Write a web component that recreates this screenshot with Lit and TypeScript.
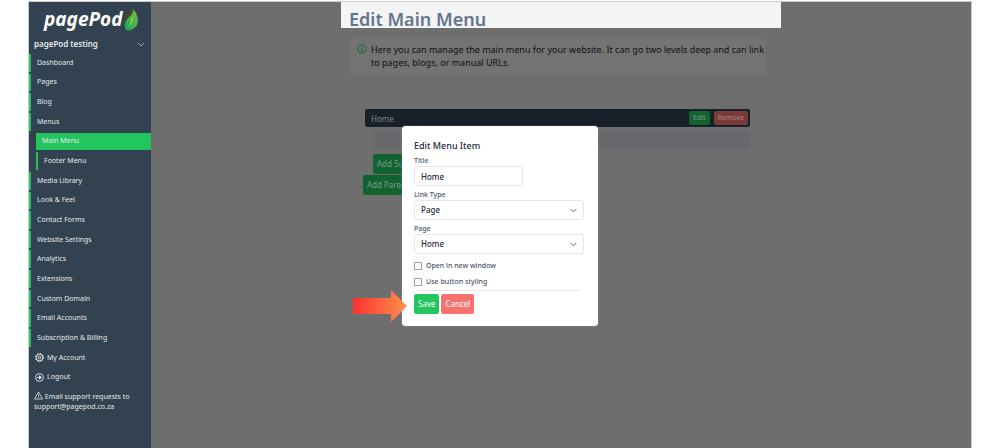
import { LitElement, html, css, svg } from "lit";
import { customElement, property, state } from "lit/decorators.js";
import { classMap } from "lit/directives/class-map.js";

const chevron = svg`<path d="M1 1 L4 4 L7 1" fill="none" stroke="currentColor" stroke-width="1" stroke-linecap="round" stroke-linejoin="round"/>`;

interface NavItem {
  label: string;
  sub?: boolean;
  active?: boolean;
}

const NAV: NavItem[] = [
  { label: "Dashboard" },
  { label: "Pages" },
  { label: "Blog" },
  { label: "Menus" },
  { label: "Main Menu", sub: true, active: true },
  { label: "Footer Menu", sub: true },
  { label: "Media Library" },
  { label: "Look & Feel" },
  { label: "Contact Forms" },
  { label: "Website Settings" },
  { label: "Analytics" },
  { label: "Extensions" },
  { label: "Custom Domain" },
  { label: "Email Accounts" },
  { label: "Subscription & Billing" },
];

@customElement("side-nav")
export class SideNav extends LitElement {
  static styles = css`
    :host {
      display: block;
      background: #334250;
      color: #e5e7eb;
      font-size: 7px;
      line-height: 10px;
    }
    * { box-sizing: border-box; }
    a { color: inherit; text-decoration: none; }
    .logo {
      display: flex;
      align-items: center;
      gap: 2px;
      height: 34px;
      padding-left: 15px;
      color: #fff;
      font: italic 700 19px/34px "Noto Sans", sans-serif;
    }
    .leaf { width: 14px; height: 24px; margin-top: 2px; }
    .site {
      display: flex;
      align-items: center;
      justify-content: space-between;
      width: 100%;
      height: 16px;
      padding: 0 6px 0 5px;
      border: 0;
      background: none;
      color: #e5e7eb;
      font: 600 8px/12px "Noto Sans", sans-serif;
    }
    .site svg { width: 8px; height: 5px; color: #94a3b8; }
    .links {
      display: grid;
      grid-auto-rows: 1fr;
      min-height: 334px;
      margin-top: 2px;
    }
    .item {
      display: flex;
      align-items: center;
      margin-bottom: 2px;
      padding-left: 6px;
      border-left: 2px solid #22c55e;
    }
    .sub { margin-left: 7px; }
    .active { background: #22c55e; padding-left: 4px; }
    .plain {
      display: flex;
      align-items: center;
      gap: 3px;
      margin-bottom: 2px;
      padding-left: 6px;
    }
    .icon { width: 9px; height: 9px; vertical-align: -1px; }
    .support { margin: 3px 5px 0; }
  `;

  render() {
    return html`
      <div class="logo">
        <span>pagePod</span>
        <svg class="leaf" viewBox="0 0 14 24" aria-hidden="true">
          <defs>
            <linearGradient id="pod" x1="0" y1="1" x2="1" y2="0">
              <stop offset="0" stop-color="#16a15a"/><stop offset="1" stop-color="#7cc242"/>
            </linearGradient>
          </defs>
          <path d="M9 1 C13 5 15 12 13 17 C11 21 6 23 2 22 C0 19 0 12 3 8 C5 5 8 4 9 1Z" fill="url(#pod)"/>
          <path d="M9 1 C10 5 7 7 5 9 C3 11 1 13 1 17 C0 13 1 10 3 8 C5 5 8 4 9 1Z" fill="#4d3a20"/>
          <path d="M9 7 C10 12 8 16 5 19 C6 15 7 12 9 7Z" fill="#8ccb4a"/>
        </svg>
      </div>
      <button class="site">pagePod testing
        <svg viewBox="0 0 8 5" aria-hidden="true">${chevron}</svg>
      </button>
      <nav class="links">
        ${NAV.map(
          (n) => html`<a href="#" class=${classMap({ item: true, sub: !!n.sub, active: !!n.active })}>${n.label}</a>`
        )}
        <a href="#" class="plain">
          <svg class="icon" viewBox="0 0 18 18" fill="none" stroke="currentColor" aria-hidden="true">
            <circle cx="9" cy="9" r="6.8" stroke-width="2"/>
            <circle cx="9" cy="9" r="2.6" stroke-width="2"/>
            <circle cx="9" cy="9" r="8" stroke-width="2" stroke-dasharray="3.1 3.18"/>
          </svg>My Account</a>
        <a href="#" class="plain">
          <svg class="icon" viewBox="0 0 18 18" fill="none" stroke="currentColor" stroke-width="1.8" aria-hidden="true">
            <circle cx="9" cy="9" r="7.8"/>
            <path d="M4 9 H12"/><path d="M9 5.5 L13 9 L9 12.5Z" fill="currentColor"/>
          </svg>Logout</a>
      </nav>
      <div class="support">
        <svg class="icon" viewBox="0 0 18 18" fill="none" stroke="currentColor" stroke-width="1.6" stroke-linejoin="round" aria-hidden="true">
          <path d="M9 2 L17 16 H1Z"/><path d="M9 7 V11 M9 12.5 V14"/>
        </svg>
        Email support requests to support@pagepod.co.za
      </div>
    `;
  }
}

@customElement("menu-item-dialog")
export class MenuItemDialog extends LitElement {
  @property() name = "Home";

  static styles = css`
    :host { display: block; width: 196px; }
    * { box-sizing: border-box; }
    .card {
      padding: 14px 14px 12px 12px;
      border-radius: 4px;
      background: #fff;
      color: #1f2937;
      box-shadow: 0 0 1px #d1d5db;
    }
    h2 { margin: 0 0 4px; font-size: 9px; line-height: 12px; font-weight: 500; }
    .field { display: block; margin-bottom: 4px; }
    .field:last-of-type { margin-bottom: 3px; }
    label { color: #475569; font-size: 7px; line-height: 10px; font-weight: 500; }
    .field label { display: block; }
    input[type="text"], select {
      display: block;
      width: 100%;
      height: 20px;
      padding: 0 6px;
      border: 1px solid #e5e7eb;
      border-radius: 3px;
      background: #fff;
      color: #1f2937;
      font: 500 8px/12px "Noto Sans", sans-serif;
      appearance: none;
    }
    input[type="text"].short { width: 109px; }
    .pick { position: relative; }
    .pick svg {
      position: absolute;
      right: 7px;
      top: 8px;
      width: 7px;
      height: 5px;
      color: #4b5563;
      pointer-events: none;
    }
    .check { display: flex; align-items: center; gap: 4px; height: 16px; }
    .check input {
      appearance: none;
      width: 8px;
      height: 8px;
      margin: 0;
      border: 1px solid #9ca3af;
      background: #fff;
    }
    hr { margin: 0 4px 3px; border: 0; border-top: 1px solid #e5e7eb; }
    .actions { display: flex; gap: 2px; }
    button {
      height: 20px;
      padding: 0 4px;
      border: 0;
      border-radius: 2px;
      color: #fff;
      font: 8px/12px "Noto Sans", sans-serif;
    }
    .save { background: #22c55e; }
    .cancel { background: #f87171; }
  `;

  render() {
    return html`
      <div class="card" role="dialog" aria-labelledby="heading">
        <h2 id="heading">Edit Menu Item</h2>
        <div class="field">
          <label for="title">Title</label>
          <input class="short" id="title" type="text" .value=${this.name} />
        </div>
        <div class="field">
          <label for="type">Link Type</label>
          <div class="pick">
            <select id="type"><option>Page</option></select>
            <svg viewBox="0 0 8 5" aria-hidden="true">${chevron}</svg>
          </div>
        </div>
        <div class="field">
          <label for="page">Page</label>
          <div class="pick">
            <select id="page"><option>Home</option></select>
            <svg viewBox="0 0 8 5" aria-hidden="true">${chevron}</svg>
          </div>
        </div>
        <div class="check"><input type="checkbox" id="blank" /><label for="blank">Open in new window</label></div>
        <div class="check"><input type="checkbox" id="styled" /><label for="styled">Use button styling</label></div>
        <hr />
        <div class="actions">
          <button class="save">Save</button>
          <button class="cancel">Cancel</button>
        </div>
      </div>
    `;
  }
}

@customElement("app-root")
export class AppRoot extends LitElement {
  @state() private items = ["Home"];

  static styles = css`
    :host {
      display: block;
      min-height: 100vh;
      box-sizing: border-box;
      padding: 1px 28px 0;
      background: #fff;
      font-family: "Noto Sans", sans-serif;
    }
    * { box-sizing: border-box; }
    .page {
      position: relative;
      display: grid;
      grid-template-columns: 122px 1fr;
      min-height: calc(100vh - 1px);
      border: 1px solid #c9cccf;
      border-bottom: 0;
      background: #6e6e6e;
    }
    .content { width: 100%; max-width: 440px; margin: 0 auto; }
    h1 {
      margin: 0;
      padding: 4px 8px 0;
      height: 26px;
      background: #f3f4f6;
      color: #64748b;
      font-size: 18px;
      line-height: 26px;
      font-weight: 600;
    }
    .info {
      display: flex;
      gap: 4px;
      margin: 9px 14px 33px 7px;
      padding: 5px 0 6px 8px;
      border: 1px dotted #686868;
      border-radius: 3px;
      background: #737373;
      color: #111;
      font-size: 9px;
      line-height: 13px;
    }
    .info svg { flex: none; width: 10px; height: 10px; margin-top: 1px; color: #17693a; }
    .info p { margin: 0; }
    .menu { margin: 0 31px 0 24px; }
    .row {
      display: flex;
      align-items: center;
      gap: 4px;
      height: 18px;
      padding: 0 2px 0 6px;
      border-radius: 2px;
      background: #18202a;
      color: #80868c;
      font-size: 8px;
    }
    .row span { flex: 1; }
    button {
      border: 0;
      border-radius: 2px;
      background: #11632f;
      color: #80998a;
      font: 8px/12px "Noto Sans", sans-serif;
    }
    .row button { height: 14px; padding: 0 4px; font-size: 7px; }
    .row .remove { background: #7c3939; color: #a98686; }
    .drop { height: 20px; margin: 3px 0 4px 8px; border-radius: 2px; background: #67696c; }
    .add { display: block; height: 20px; padding: 0 4px; }
    .sub { margin: 0 0 1px 8px; }
    .parent { margin-left: 22px; }
    .overlay {
      position: absolute;
      inset: 124px 0 auto;
      display: flex;
      justify-content: center;
    }
    .anchor { position: relative; }
    .arrow {
      position: absolute;
      left: -49px;
      bottom: 4px;
      width: 54px;
      height: 32px;
    }
  `;

  render() {
    return html`
      <div class="page">
        <side-nav></side-nav>
        <main class="content">
          <h1>Edit Main Menu</h1>
          <div class="info">
            <svg viewBox="0 0 20 20" fill="none" stroke="currentColor" stroke-width="2" aria-hidden="true">
              <circle cx="10" cy="10" r="8.5"/><path d="M8 9 H10.5 V14 M8 14.5 H13 M10 5 V7"/>
            </svg>
            <p>Here you can manage the main menu for your website. It can go two levels deep and can link to pages, blogs, or manual URLs.</p>
          </div>
          <div class="menu">
            ${this.items.map(
              (t) => html`
                <div class="row"><span>${t}</span><button>Edit</button><button class="remove">Remove</button></div>
                <div class="drop"></div>
                <button class="add sub">Add Sub Item</button>
              `
            )}
          </div>
          <button class="add parent">Add Parent Item</button>
        </main>
        <div class="overlay">
          <div class="anchor">
            <menu-item-dialog></menu-item-dialog>
            <svg class="arrow" viewBox="0 0 54 32" aria-hidden="true">
              <defs>
                <linearGradient id="warm"><stop offset="0" stop-color="#ff3131"/><stop offset="1" stop-color="#ff914d"/></linearGradient>
              </defs>
              <path d="M0 8 H38 V0 L54 16 L38 32 V24 H0Z" fill="url(#warm)"/>
            </svg>
          </div>
        </div>
      </div>
    `;
  }
}
